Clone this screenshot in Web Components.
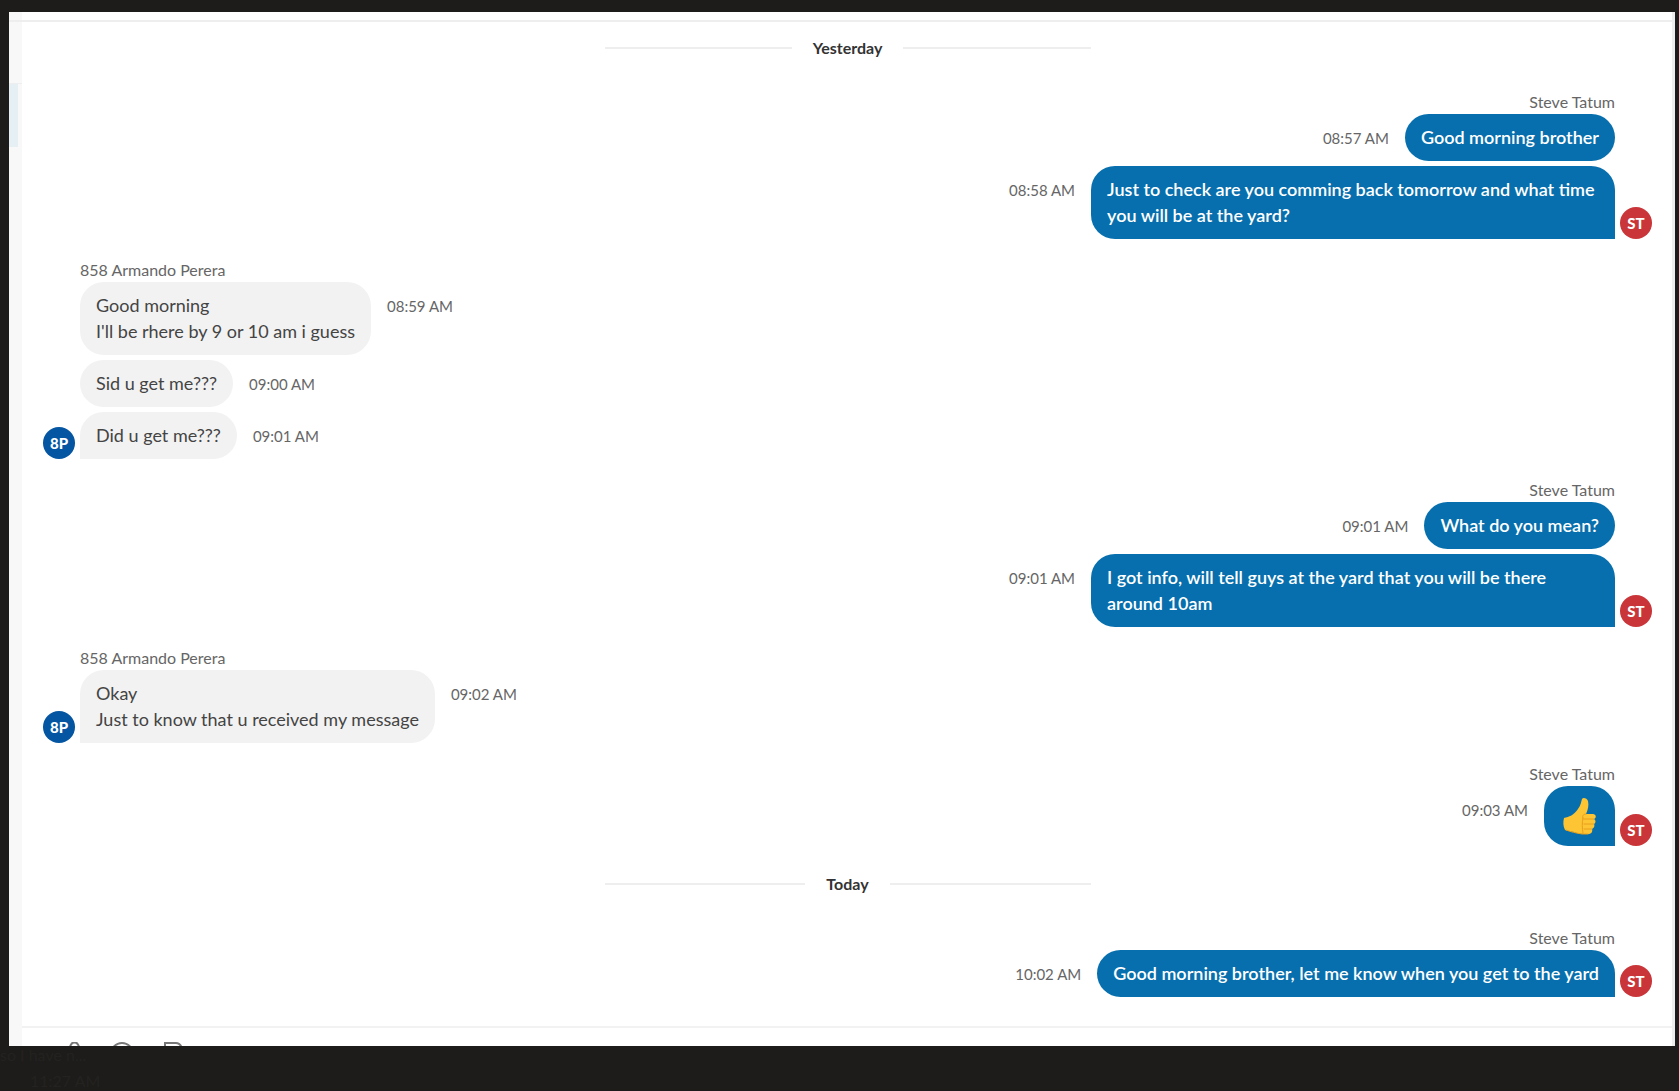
<!DOCTYPE html>
<html lang="en">
<head>
<meta charset="utf-8">
<title>Messages</title>
<style>
    html, body{
        margin:0;
        height:100%
    }
    body{
        display:flex;
        flex-direction:column;
        overflow:hidden;
        background-color:#1d1c1a;
        color:#444;
        font-family:Lato, "Liberation Sans", sans-serif;
        font-size:18px;
        line-height:26px
    }
</style>
</head>
<body>

<chat-window>
    <date-divider>Yesterday</date-divider>
    <message-group side="out" name="Steve Tatum" initials="ST">
        <chat-message time="08:57 AM">Good morning brother</chat-message>
        <chat-message time="08:58 AM">Just to check are you comming back tomorrow and what time you will be at the yard?</chat-message>
    </message-group>
    <message-group side="in" name="858 Armando Perera" initials="8P">
        <chat-message time="08:59 AM">Good morning<br>I'll be rhere by 9 or 10 am i guess</chat-message>
        <chat-message time="09:00 AM">Sid u get me???</chat-message>
        <chat-message time="09:01 AM">Did u get me???</chat-message>
    </message-group>
    <message-group side="out" name="Steve Tatum" initials="ST">
        <chat-message time="09:01 AM">What do you mean?</chat-message>
        <chat-message time="09:01 AM">I got info, will tell guys at the yard that you will be there around 10am</chat-message>
    </message-group>
    <message-group side="in" name="858 Armando Perera" initials="8P">
        <chat-message time="09:02 AM">Okay<br>Just to know that u received my message</chat-message>
    </message-group>
    <message-group side="out" name="Steve Tatum" initials="ST">
        <chat-message time="09:03 AM"><thumbs-up></thumbs-up></chat-message>
    </message-group>
    <date-divider>Today</date-divider>
    <message-group side="out" name="Steve Tatum" initials="ST">
        <chat-message time="10:02 AM">Good morning brother, let me know when you get to the yard</chat-message>
    </message-group>
</chat-window>
<dimmed-preview time="11:27 AM">so I have n...</dimmed-preview>

<script>
const makeTemplate = html => {
    const template = document.createElement('template')
    template.innerHTML = html
    return template
}

const windowTemplate = makeTemplate(`
    <style>
        :host{
            flex:1;
            min-height:0;
            display:grid;
            grid-template-columns:13px 1fr 3px;
            grid-template-rows:minmax(0, 1fr);
            padding:12px 4px 0 9px
        }
        .rail{
            display:flex;
            flex-direction:column;
            background-color:#f8f8f8
        }
        .rail-top{
            height:8px;
            border-bottom:2px solid #eee
        }
        .rail-space{
            height:61px;
            border-bottom:1px solid #eee
        }
        .rail-active{
            width:9px;
            height:63px;
            background-color:#e5eff4
        }
        .edge{
            background-color:#eee
        }
        .panel{
            display:flex;
            flex-direction:column;
            background-color:#fff
        }
        .top{
            flex:none;
            height:8px;
            border-bottom:2px solid #eee
        }
        .messages{
            flex:1;
            min-height:0;
            overflow:hidden;
            padding:9px 20px 0 21px
        }
        .tools{
            flex:none;
            display:flex;
            gap:16px;
            box-sizing:border-box;
            height:20px;
            padding:14px 36px 0;
            border-top:2px solid #f2f2f2;
            overflow:hidden
        }
        button{
            flex:none;
            width:32px;
            height:28px;
            padding:0;
            border:0;
            background:none;
            color:#777
        }
        svg{
            display:block;
            margin:0 auto
        }
    </style>
    <div class="rail">
        <div class="rail-top"></div>
        <div class="rail-space"></div>
        <div class="rail-active"></div>
    </div>
    <div class="panel">
        <div class="top"></div>
        <div class="messages"><slot></slot></div>
        <div class="tools">
            <button aria-label="Attach">
                <svg width="24" height="28" fill="none" stroke="currentColor" stroke-width="2"><path d="M8 20V6a4 5 0 0 1 9 0v14a4 5 0 0 1-9 0"/></svg>
            </button>
            <button aria-label="Emoji">
                <svg width="24" height="28" fill="none" stroke="currentColor" stroke-width="2"><circle cx="12" cy="12" r="11"/></svg>
            </button>
            <button aria-label="Note">
                <svg width="28" height="28" fill="none" stroke="currentColor" stroke-width="2"><path d="M9 24V1h11q4 0 6 5v18z"/></svg>
            </button>
        </div>
    </div>
    <div class="edge"></div>
`)

const previewTemplate = makeTemplate(`
    <style>
        :host{
            flex:none;
            display:flex;
            flex-direction:column;
            gap:8px;
            box-sizing:border-box;
            height:45px;
            background-color:#1d1c1a;
            color:#232220;
            font-size:16px;
            line-height:18px
        }
        time{
            padding-left:30px
        }
    </style>
    <span><slot></slot></span>
    <time></time>
`)

const dividerTemplate = makeTemplate(`
    <style>
        :host{
            display:flex;
            align-items:center;
            gap:21px;
            width:486px;
            height:34px;
            margin:0 auto 27px;
            color:#333;
            font-size:16px;
            font-weight:700;
            line-height:18px
        }
        .line{
            flex:1;
            height:2px;
            background-color:#eee
        }
    </style>
    <div class="line"></div>
    <slot></slot>
    <div class="line"></div>
`)

const groupTemplate = makeTemplate(`
    <style>
        :host{
            display:flex;
            align-items:flex-end;
            gap:5px;
            margin-bottom:21px
        }
        :host([side="out"]){
            --bubble:#076fad;
            --bubble-text:#fff;
            --weight:600;
            --direction:row-reverse;
            --tail:24px 24px 0 24px;
            flex-direction:row-reverse;
            text-align:right
        }
        :host([side="in"]){
            --bubble:#f2f2f2;
            --bubble-text:#444;
            --weight:400;
            --direction:row;
            --tail:24px 24px 24px 0
        }
        .list{
            flex:1;
            display:flex;
            flex-direction:column;
            gap:5px
        }
        .name{
            height:20px;
            margin-bottom:-3px;
            color:#666;
            font-size:16px;
            line-height:20px
        }
        .avatar{
            display:flex;
            align-items:center;
            justify-content:center;
            width:32px;
            height:32px;
            border-radius:50%;
            background-color:#0455a2;
            color:#fff;
            font-size:15px;
            font-weight:900
        }
        :host([side="out"]) .avatar{
            background-color:#c93538
        }
        ::slotted(:last-child){
            --radius:var(--tail)
        }
    </style>
    <div class="avatar"></div>
    <div class="list">
        <div class="name"></div>
        <slot></slot>
    </div>
`)

const messageTemplate = makeTemplate(`
    <style>
        :host{
            display:flex;
            flex-direction:var(--direction);
            align-items:flex-start;
            gap:16px;
            text-align:left
        }
        .bubble{
            box-sizing:border-box;
            max-width:calc(100% / 3);
            padding:10px 16px 11px;
            border-radius:var(--radius, 24px);
            background-color:var(--bubble);
            color:var(--bubble-text);
            font-weight:var(--weight)
        }
        time{
            padding-top:11px;
            color:#666;
            font-size:15px
        }
    </style>
    <div class="bubble"><slot></slot></div>
    <time></time>
`)

const thumbTemplate = makeTemplate(`
    <style>
        :host{
            display:block;
            width:39px;
            height:39px
        }
        svg{
            display:block
        }
    </style>
    <svg width="39" height="39" viewBox="0 0 39 39" role="img" aria-label="Thumbs up">
        <path fill="#fdc434" d="M4 22c5-1 10-3 14-9 3-4 3-7 4-10 1-2 5-1 6 2 1 4 0 9-2 13h7c3 0 4 4 1 5 2 1 2 4 0 5 1 2 0 4-2 5 1 3-1 5-4 5-5 0-10 0-14-2-4-1-7-1-9-2-2-4-2-8-1-12z"/>
        <path fill="none" stroke="#e8a01c" stroke-width="1" stroke-linecap="round" d="M26 18c-3 0-4 2-3 5M34 23h-10M34 28h-10M32 33h-8M23 22c-1 5-1 10 0 15M6 34c5 2 10 3 16 4h6"/>
    </svg>
`)

class ChatElement extends HTMLElement {
    constructor(template){
        super()
        this.attachShadow({mode:'open'})
        this.shadowRoot.appendChild(template.content.cloneNode(true))
    }

    setText(selector, attribute){
        this.shadowRoot.querySelector(selector).textContent = this.getAttribute(attribute)
    }
}

class ChatWindow extends ChatElement {
    constructor(){
        super(windowTemplate)
    }
}

class DimmedPreview extends ChatElement {
    constructor(){
        super(previewTemplate)
        this.setText('time', 'time')
    }
}

class DateDivider extends ChatElement {
    constructor(){
        super(dividerTemplate)
    }
}

class MessageGroup extends ChatElement {
    constructor(){
        super(groupTemplate)
        this.setText('.name', 'name')
        this.setText('.avatar', 'initials')
    }
}

class ChatMessage extends ChatElement {
    constructor(){
        super(messageTemplate)
        this.setText('time', 'time')
    }
}

class ThumbsUp extends ChatElement {
    constructor(){
        super(thumbTemplate)
    }
}

window.customElements.define("chat-window", ChatWindow)
window.customElements.define("dimmed-preview", DimmedPreview)
window.customElements.define("date-divider", DateDivider)
window.customElements.define("message-group", MessageGroup)
window.customElements.define("chat-message", ChatMessage)
window.customElements.define("thumbs-up", ThumbsUp)
</script>
</body>
</html>
